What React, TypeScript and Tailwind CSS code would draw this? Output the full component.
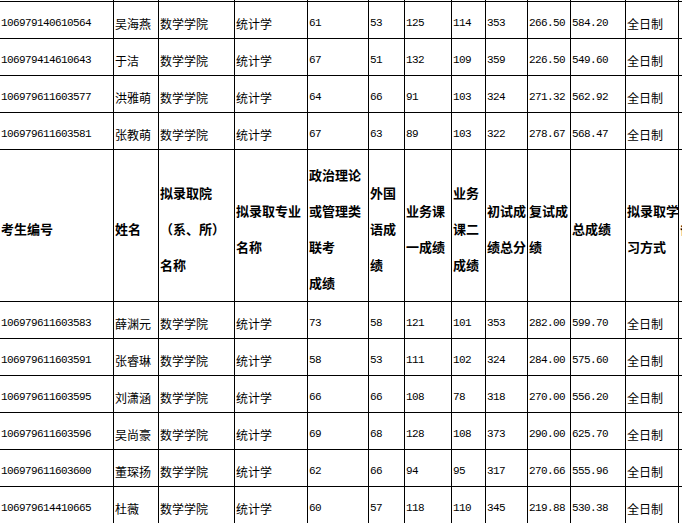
const cols = [
  "w-[114px]",
  "w-[45px]",
  "w-[76px]",
  "w-[73px]",
  "w-[61px]",
  "w-[36px]",
  "w-[47px]",
  "w-[34px]",
  "w-[42px]",
  "w-[43px]",
  "w-[55px]",
  "w-[53px]",
  "w-[60px]",
];

type Row = [string, string, string, string, string, string, string, string, string, string];

const top: Row[] = [
  ["106979140610564", "吴海燕", "61", "53", "125", "114", "353", "266.50", "584.20", "全日制"],
  ["106979414610643", "于洁", "67", "51", "132", "109", "359", "226.50", "549.60", "全日制"],
  ["106979611603577", "洪雅萌", "64", "66", "91", "103", "324", "271.32", "562.92", "全日制"],
  ["106979611603581", "张教萌", "67", "63", "89", "103", "322", "278.67", "568.47", "全日制"],
];

const bottom: Row[] = [
  ["106979611603583", "薛渊元", "73", "58", "121", "101", "353", "282.00", "599.70", "全日制"],
  ["106979611603591", "张睿琳", "58", "53", "111", "102", "324", "284.00", "575.60", "全日制"],
  ["106979611603595", "刘潇涵", "66", "66", "108", "78", "318", "270.00", "556.20", "全日制"],
  ["106979611603596", "吴尚豪", "69", "68", "128", "108", "373", "290.00", "625.70", "全日制"],
  ["106979611603600", "董琛扬", "62", "66", "94", "95", "317", "270.66", "555.96", "全日制"],
  ["106979614410665", "杜薇", "60", "57", "118", "110", "345", "219.88", "530.38", "全日制"],
];

const headers: string[][] = [
  ["考生编号"],
  ["姓名"],
  ["拟录取院", "（系、所）", "名称"],
  ["拟录取专业", "名称"],
  ["政治理论", "或管理类", "联考", "成绩"],
  ["外国", "语成", "绩"],
  ["业务课", "一成绩"],
  ["业务", "课二", "成绩"],
  ["初试成", "绩总分"],
  ["复试成", "绩"],
  ["总成绩"],
  ["拟录取学", "习方式"],
  ["备注"],
];

const cell = "border border-black p-0 pl-px pt-[7px] align-middle whitespace-nowrap overflow-hidden";
const mono = "font-['Liberation_Mono',monospace] text-[11px] tracking-[-0.6px]";
const cjk = "font-['Noto_Sans_CJK_SC',sans-serif] text-[12px]";

function DataRow({ r }: { r: Row }) {
  const [id, name, ...scores] = r;
  const nums = scores.slice(0, 7);
  return (
    <tr className="h-[37px]">
      <td className={`${cell} ${mono}`}>{id}</td>
      <td className={`${cell} ${cjk}`}>{name}</td>
      <td className={`${cell} ${cjk}`}>数学学院</td>
      <td className={`${cell} ${cjk}`}>统计学</td>
      {nums.map((n, i) => (
        <td key={i} className={`${cell} ${mono}`}>
          {n}
        </td>
      ))}
      <td className={`${cell} ${cjk}`}>{scores[7]}</td>
      <td className={cell}></td>
    </tr>
  );
}

export default function App() {
  return (
    <div className="w-[682px] h-[523px] overflow-hidden bg-white text-black">
      <table className="table-fixed border-collapse w-[739px] -ml-px -mt-[36px]">
        <colgroup>
          {cols.map((c, i) => (
            <col key={i} className={c} />
          ))}
        </colgroup>
        <tbody>
          <tr className="h-[37px]">
            {cols.map((_, i) => (
              <td key={i} className={cell}></td>
            ))}
          </tr>
          {top.map((r) => (
            <DataRow key={r[0]} r={r} />
          ))}
          <tr className="h-[149px]">
            {headers.map((lines, i) => (
              <td
                key={i}
                className={`${cell} font-['Noto_Sans_CJK_SC',sans-serif] text-[13px] font-bold leading-[36px] pt-[5px]`}
              >
                {lines.map((l, j) => (
                  <div key={j}>{l}</div>
                ))}
              </td>
            ))}
          </tr>
          {bottom.map((r) => (
            <DataRow key={r[0]} r={r} />
          ))}
        </tbody>
      </table>
    </div>
  );
}
